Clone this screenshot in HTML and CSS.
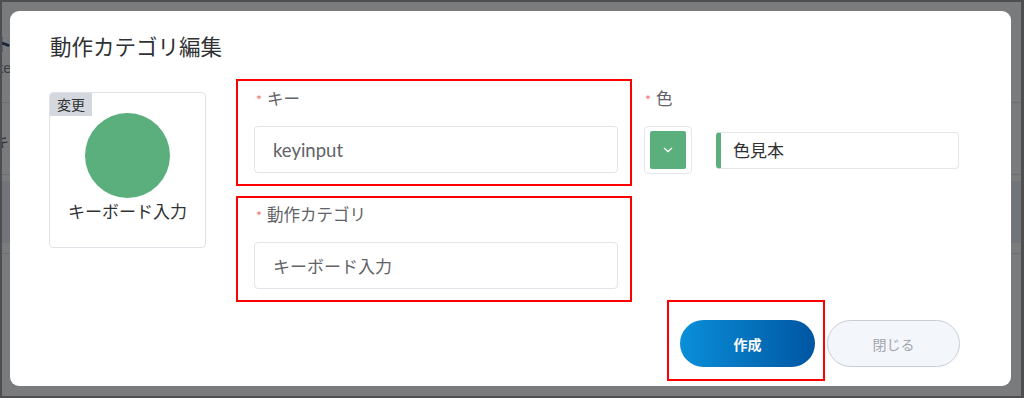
FILE: index.html
```html
<!DOCTYPE html>
<html lang="ja">
<head>
  <meta charset="UTF-8" />
  <title>動作カテゴリ編集</title>
  <link rel="stylesheet" href="styles.css">
</head>
<body>
  <div class="screen">
    <div class="behind">
      <span class="behind-title">ト</span>
      <span class="behind-sub">ke</span>
      <span class="behind-row">キ</span>
      <div class="behind-line line-a"></div>
      <div class="behind-line line-b"></div>
      <div class="behind-band"></div>
      <div class="behind-line line-c"></div>
    </div>

    <div class="modal">
      <h1 class="modal-title">動作カテゴリ編集</h1>

      <div class="modal-body">
        <div class="preview">
          <span class="preview-tag">変更</span>
          <div class="preview-circle"></div>
          <div class="preview-name">キーボード入力</div>
        </div>

        <div class="fields">
          <div class="field marked">
            <label class="field-label"><span class="req">*</span>キー</label>
            <input class="field-input key-input" type="text" value="keyinput" />
          </div>
          <div class="field marked">
            <label class="field-label"><span class="req">*</span>動作カテゴリ</label>
            <input class="field-input" type="text" value="キーボード入力" />
          </div>
        </div>

        <div class="color-field">
          <label class="field-label"><span class="req">*</span>色</label>
          <div class="color-row">
            <div class="color-picker">
              <div class="color-swatch">
                <svg width="10" height="6" viewBox="0 0 10 6"><polyline points="1,1 5,4.6 9,1" fill="none" stroke="#fff" stroke-width="1.3" /></svg>
              </div>
            </div>
            <div class="color-sample">色見本</div>
          </div>
        </div>
      </div>

      <div class="modal-footer">
        <div class="marked btn-mark">
          <button class="btn btn-primary">作成</button>
        </div>
        <button class="btn btn-close">閉じる</button>
      </div>
    </div>
  </div>
</body>
</html>
```

FILE: styles.css
```css
body {
  margin: 0;
  font-family: Lato, "Noto Sans CJK JP", sans-serif;
  color: #303133;
}

.screen {
  position: relative;
  width: 1024px;
  height: 398px;
  box-sizing: border-box;
  border: 2px solid #4e4e50;
  border-right-width: 3px;
  background: #7a7b7d;
  padding: 9px 10px 9px 8px;
  overflow: hidden;
}

/* page under the overlay */
.behind {
  position: absolute;
  inset: 0;
}
.behind-title {
  position: absolute;
  left: -8px;
  top: 28px;
  font-size: 18px;
  font-weight: bold;
  color: #1e2633;
}
.behind-sub {
  position: absolute;
  left: -6px;
  top: 56px;
  font-size: 15px;
  color: #3a3d42;
}
.behind-row {
  position: absolute;
  left: -8px;
  top: 128px;
  font-size: 15px;
  color: #2e3238;
}
.behind-line {
  position: absolute;
  left: 0;
  right: 0;
  height: 1px;
  background: #6c6e72;
}
.line-a { top: 100px; }
.line-b { top: 172px; }
.line-c { top: 251px; }
.behind-band {
  position: absolute;
  left: 0;
  right: 0;
  top: 179px;
  height: 62px;
  background: #717579;
}

.modal {
  position: relative;
  height: 375px;
  box-sizing: border-box;
  background: #fff;
  border-radius: 9px;
  padding: 22px 51px 5px 39px;
}

.modal-title {
  margin: 0 0 18px 1px;
  height: 28px;
  font-size: 21.5px;
  line-height: 28px;
  font-weight: normal;
  color: #303133;
}

.modal-body {
  display: flex;
  align-items: flex-start;
}

.preview {
  position: relative;
  width: 157px;
  height: 156px;
  box-sizing: border-box;
  margin-top: 13px;
  margin-right: 30px;
  border: 1px solid #dfe2e7;
  border-radius: 4px;
  display: flex;
  flex-direction: column;
  align-items: center;
}
.preview-tag {
  position: absolute;
  top: 0;
  left: 0;
  width: 42px;
  height: 23px;
  line-height: 23px;
  text-align: center;
  font-size: 14px;
  background: #d4d8de;
  color: #303133;
  border-top-left-radius: 3px;
}
.preview-circle {
  width: 85px;
  height: 85px;
  margin-top: 20px;
  border-radius: 50%;
  background: #5aaf7d;
}
.preview-name {
  margin-top: 3px;
  font-size: 17px;
  line-height: 22px;
  color: #303133;
}

.fields {
  display: flex;
  flex-direction: column;
  gap: 10px;
  width: 396px;
}

.marked {
  border: 2px solid #ff0000;
}

.field {
  height: 107px;
  box-sizing: border-box;
  padding: 7px 12px 0 16px;
}
.field + .field {
  height: 106px;
  padding-top: 6px;
}

.field-label {
  display: block;
  height: 22px;
  margin-left: 2px;
  font-size: 16.5px;
  line-height: 22px;
  color: #606266;
}
.req {
  color: #f56c6c;
  font-size: 14px;
  line-height: 0;
  margin-right: 5px;
}

.field-input {
  display: block;
  width: 100%;
  height: 47px;
  margin-top: 16px;
  box-sizing: border-box;
  border: 1px solid #e2e5ea;
  border-radius: 4px;
  padding: 0 18px;
  font-family: Lato, "Noto Sans CJK JP", sans-serif;
  font-size: 17px;
  color: #606266;
  outline: none;
}
.key-input {
  font-size: 18.5px;
}

.color-field {
  margin-left: 12px;
  padding-top: 9px;
}
.color-field .field-label {
  margin-left: 1px;
}
.color-row {
  display: flex;
  align-items: center;
  margin-top: 16px;
}
.color-picker {
  width: 48px;
  height: 48px;
  box-sizing: border-box;
  border: 1px solid #e4e6ea;
  border-radius: 4px;
  padding: 4px 5px;
}
.color-swatch {
  height: 38px;
  border-radius: 2px;
  background: #5aaf7d;
  display: flex;
  align-items: center;
  justify-content: center;
}
.color-sample {
  margin-left: 24px;
  width: 243px;
  height: 37px;
  box-sizing: border-box;
  border: 1px solid #e4e6ea;
  border-left: 5px solid #5aaf7d;
  border-radius: 4px;
  padding-left: 12px;
  line-height: 35px;
  font-size: 17px;
  color: #303133;
}

.modal-footer {
  display: flex;
  justify-content: flex-end;
  align-items: flex-start;
  margin-top: -2px;
}
.btn-mark {
  padding: 18px 8px 12px 11px;
}
.btn {
  display: block;
  height: 47px;
  border-radius: 24px;
  font-family: "Noto Sans CJK JP", sans-serif;
  font-size: 14px;
  cursor: pointer;
}
.btn-primary {
  width: 135px;
  border: none;
  background: linear-gradient(90deg, #0a8fd9, #0056a2);
  color: #fff;
  font-weight: bold;
}
.btn-close {
  width: 133px;
  margin-left: 2px;
  margin-top: 20px;
  border: 1px solid #c9ced6;
  background: #f3f6fa;
  color: #a3a7ae;
}
```
